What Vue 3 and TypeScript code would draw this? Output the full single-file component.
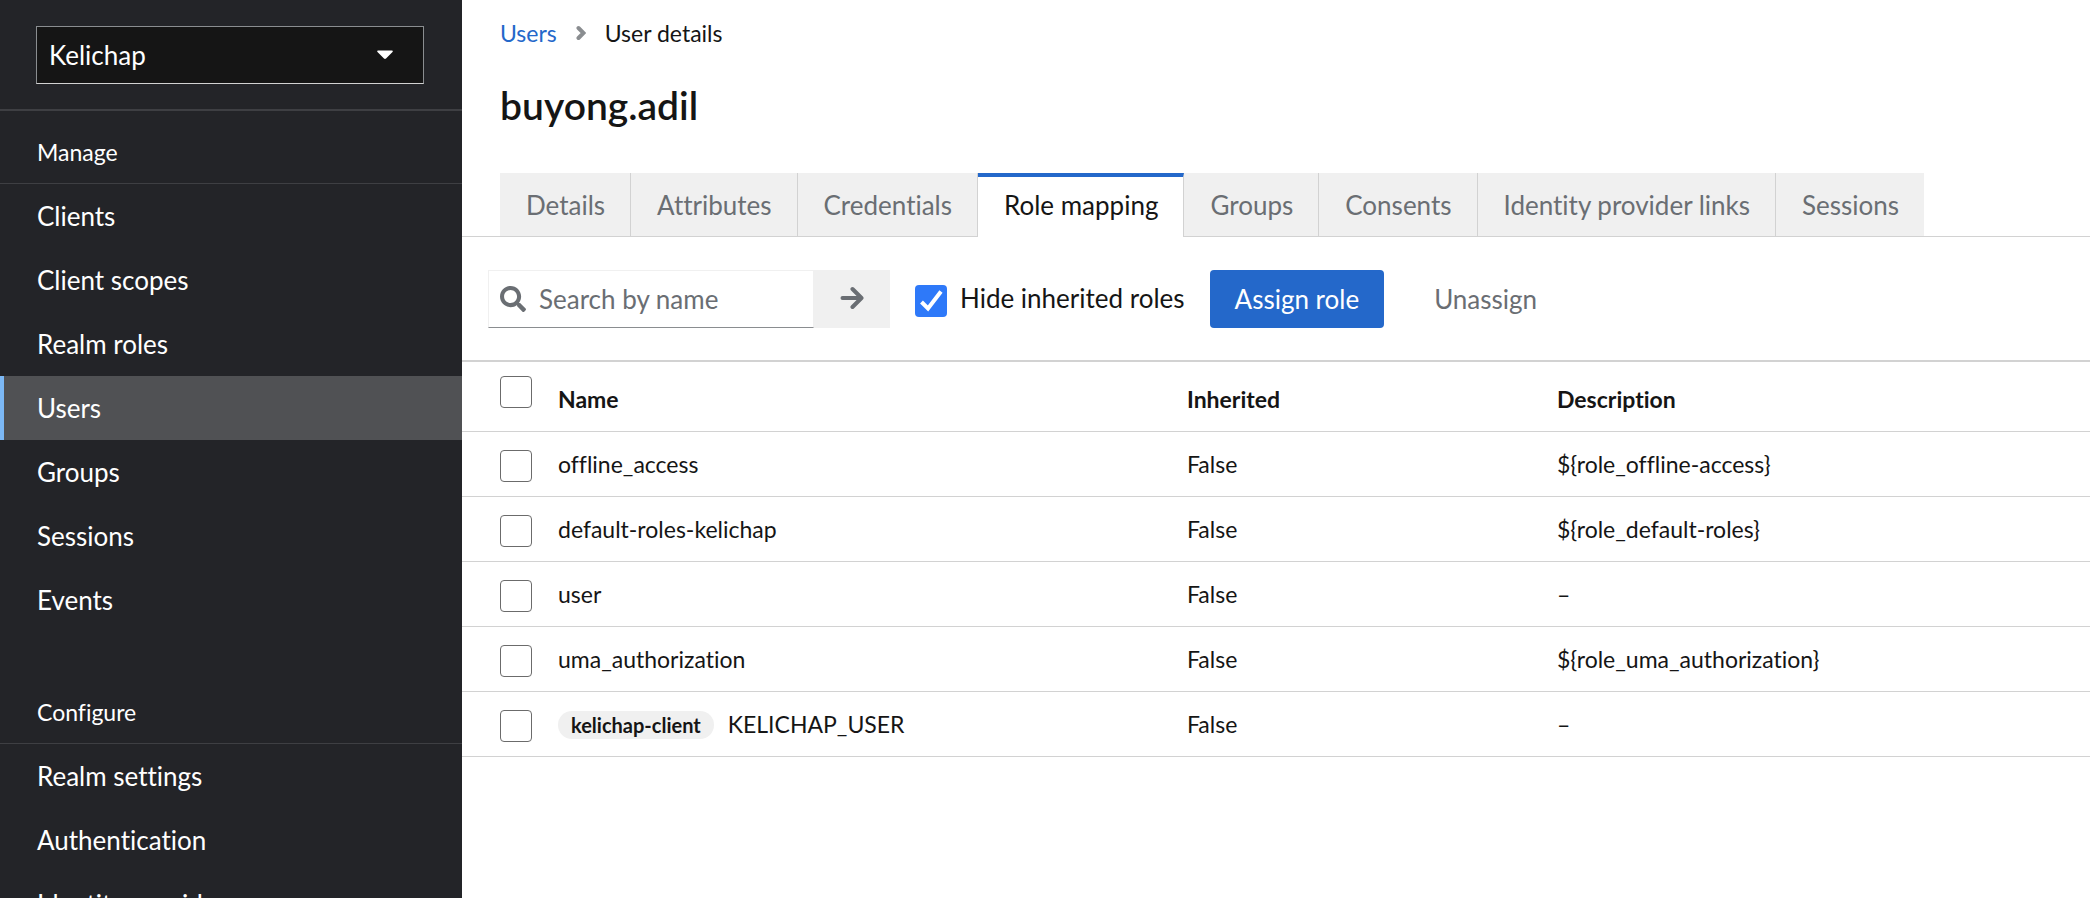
<script setup lang="ts">
import { computed, ref } from 'vue'

interface Role {
  name: string
  client?: string
  inherited: string
  description: string
}

const realm = ref('Kelichap')
const sections = [
  {
    title: 'Manage',
    items: ['Clients', 'Client scopes', 'Realm roles', 'Users', 'Groups', 'Sessions', 'Events'],
  },
  {
    title: 'Configure',
    items: ['Realm settings', 'Authentication', 'Identity providers'],
  },
]
const activePage = 'Users'

const tabs = [
  'Details',
  'Attributes',
  'Credentials',
  'Role mapping',
  'Groups',
  'Consents',
  'Identity provider links',
  'Sessions',
]
const activeTab = ref('Role mapping')

const search = ref('')
const hideInherited = ref(true)
const roles: Role[] = [
  { name: 'offline_access', inherited: 'False', description: '${role_offline-access}' },
  { name: 'default-roles-kelichap', inherited: 'False', description: '${role_default-roles}' },
  { name: 'user', inherited: 'False', description: '–' },
  { name: 'uma_authorization', inherited: 'False', description: '${role_uma_authorization}' },
  { name: 'KELICHAP_USER', client: 'kelichap-client', inherited: 'False', description: '–' },
]
const selected = ref<string[]>([])
const allSelected = computed({
  get: () => selected.value.length === roles.length,
  set: (on: boolean) => {
    selected.value = on ? roles.map((r) => r.name) : []
  },
})
</script>

<template>
  <div class="page">
    <aside class="sidebar">
      <div class="realm">
        <div class="realm-box">
          <select v-model="realm" aria-label="Realm">
            <option>Kelichap</option>
          </select>
          <svg class="caret" viewBox="0 0 16 10" aria-hidden="true">
            <path d="M1.2 0.5h13.6c.9 0 1.3 1 .7 1.6L9 8.6c-.6.6-1.4.6-2 0L.5 2.1C-.1 1.5.3.5 1.2.5z" />
          </svg>
        </div>
      </div>
      <nav>
        <section v-for="s in sections" :key="s.title" class="nav-section">
          <h2>{{ s.title }}</h2>
          <ul>
            <li v-for="item in s.items" :key="item">
              <a href="#" :class="{ current: item === activePage }">{{ item }}</a>
            </li>
          </ul>
        </section>
      </nav>
    </aside>

    <main class="content">
      <nav class="breadcrumb" aria-label="Breadcrumb">
        <a href="#">Users</a>
        <svg class="angle" viewBox="0 0 10 16" aria-hidden="true">
          <path d="M2.500 3l5 5-5 5" />
        </svg>
        <span>User details</span>
      </nav>
      <h1>buyong.adil</h1>

      <div class="tabs" role="tablist">
        <button
          v-for="t in tabs"
          :key="t"
          type="button"
          role="tab"
          class="tab"
          :class="{ active: t === activeTab }"
          :aria-selected="t === activeTab"
          @click="activeTab = t"
        >
          {{ t }}
        </button>
      </div>

      <div class="toolbar">
        <form class="search" @submit.prevent>
          <label class="search-box">
            <svg viewBox="0 0 512 512" aria-hidden="true">
              <path d="M505 442.7L405.3 343c-4.500-4.500-10.600-7-17-7H372c27.600-35.300 44-79.700 44-128C416 93.100 322.900 0 208 0S0 93.100 0 208s93.100 208 208 208c48.300 0 92.700-16.400 128-44v16.300c0 6.400 2.500 12.500 7 17l99.700 99.700c9.400 9.400 24.600 9.400 33.900 0l28.300-28.300c9.400-9.400 9.400-24.600.1-34zM208 336c-70.700 0-128-57.200-128-128 0-70.700 57.200-128 128-128 70.700 0 128 57.200 128 128 0 70.700-57.200 128-128 128z" />
            </svg>
            <input v-model="search" type="text" placeholder="Search by name" aria-label="Search by name" />
          </label>
          <button type="submit" class="go" aria-label="Search">
            <svg viewBox="0 0 24 24" aria-hidden="true">
              <path d="M2.500 12H20M12.500 3L21.500 12l-9 9" />
            </svg>
          </button>
        </form>
        <label class="hide-inherited">
          <input v-model="hideInherited" type="checkbox" class="check" />
          <span>Hide inherited roles</span>
        </label>
        <button type="button" class="assign">Assign role</button>
        <button type="button" class="unassign">Unassign</button>
      </div>

      <table class="roles">
        <thead>
          <tr>
            <th class="pick"><input v-model="allSelected" type="checkbox" class="check" aria-label="Select all rows" /></th>
            <th class="name">Name</th>
            <th class="inherited">Inherited</th>
            <th>Description</th>
          </tr>
        </thead>
        <tbody>
          <tr v-for="r in roles" :key="r.name">
            <td class="pick">
              <input v-model="selected" type="checkbox" class="check" :value="r.name" :aria-label="'Select ' + r.name" />
            </td>
            <td>
              <span v-if="r.client" class="badge">{{ r.client }}</span>{{ r.name }}
            </td>
            <td>{{ r.inherited }}</td>
            <td>{{ r.description }}</td>
          </tr>
        </tbody>
      </table>
    </main>
  </div>
</template>

<style>
body {
  margin: 0;
  background: #fff;
}
</style>

<style scoped>
.page {
  display: flex;
  height: 100vh;
  overflow: hidden;
  font-family: Lato, 'Liberation Sans', sans-serif;
  font-size: 26px;
  font-variant-ligatures: none;
  color: #151515;
}
.page * {
  box-sizing: border-box;
}
button,
input,
select {
  font: inherit;
  font-variant-ligatures: none;
  color: inherit;
  margin: 0;
  border: 0;
  border-radius: 0;
}
a {
  text-decoration: none;
}

.sidebar {
  flex: 0 0 462px;
  overflow: hidden;
  background: #232428;
  color: #fff;
}
.realm {
  padding: 26px 38px 25px 36px;
  border-bottom: 2px solid #3e3f43;
}
.realm-box {
  position: relative;
}
.realm-box select {
  display: block;
  width: 100%;
  height: 58px;
  padding: 0 12px;
  appearance: none;
  background: #151515;
  border: 1px solid #8a8d90;
  border-bottom-color: #d2d2d2;
}
.caret {
  position: absolute;
  right: 31px;
  top: 24px;
  width: 16px;
  height: 10px;
  fill: #fff;
  pointer-events: none;
}
.nav-section + .nav-section {
  margin-top: 39px;
}
.nav-section h2 {
  margin: 0;
  padding: 25px 37px 15px;
  font-size: 23px;
  font-weight: 400;
  line-height: 32px;
  border-bottom: 1px solid #3e3f43;
}
.nav-section ul {
  margin: 0;
  padding: 0;
  list-style: none;
}
.nav-section a {
  display: block;
  padding: 0 37px;
  line-height: 64px;
  color: #fff;
}
.nav-section a.current {
  padding-left: 33px;
  border-left: 4px solid #7cb8f5;
  background: #505154;
}

.content {
  flex: 1;
  min-width: 0;
}
.breadcrumb {
  display: flex;
  align-items: center;
  padding: 16px 38px 0;
  font-size: 23px;
  line-height: 34px;
}
.breadcrumb a {
  color: #2468ca;
}
.angle {
  width: 10px;
  height: 16px;
  margin: 0 19px;
  fill: none;
  stroke: #8a8d90;
  stroke-width: 4;
  stroke-linecap: round;
}
h1 {
  margin: 0;
  padding: 31px 38px 43px;
  font-size: 39px;
  font-weight: 600;
  line-height: 49px;
}

.tabs {
  display: flex;
  padding-left: 38px;
  box-shadow: inset 0 -1px #d2d2d2;
}
.tab {
  height: 64px;
  padding: 0 25px 0 26px;
  background: #f0f0f0;
  color: #6a6e73;
  border-right: 1px solid #d2d2d2;
  border-bottom: 1px solid #d2d2d2;
  white-space: nowrap;
}
.tab:last-child {
  border-right: 0;
}
.tab.active {
  padding-bottom: 4px;
  background: #fff;
  color: #151515;
  border-top: 4px solid #2468ca;
  border-bottom: 0;
}

.toolbar {
  display: flex;
  align-items: center;
  padding: 33px 26px 32px;
}
.search {
  display: flex;
}
.search-box {
  display: flex;
  align-items: center;
  width: 326px;
  height: 58px;
  padding-left: 11px;
  border: 1px solid #f0f0f0;
  border-bottom-color: #8a8d90;
}
.search-box svg {
  flex: none;
  width: 26px;
  height: 26px;
  margin-right: 13px;
  fill: #6a6e73;
}
.search-box input {
  flex: 1;
  min-width: 0;
  padding: 0;
  background: none;
  outline: 0;
}
.search-box input::placeholder {
  color: #6a6e73;
  opacity: 1;
}
.go {
  display: flex;
  align-items: center;
  justify-content: center;
  width: 76px;
  padding: 0 0 2px;
  background: #f0f0f0;
}
.go svg {
  width: 24px;
  height: 24px;
  fill: none;
  stroke: #6a6e73;
  stroke-width: 4;
  stroke-linecap: round;
  stroke-linejoin: round;
}
.check {
  display: block;
  flex: none;
  width: 32px;
  height: 32px;
  appearance: none;
  background: #fff;
  border: 1px solid #6b6b6b;
  border-radius: 4px;
}
.check:checked {
  border: 0;
  background: #2e79f9 url("data:image/svg+xml,%3Csvg xmlns='http://www.w3.org/2000/svg' viewBox='0 0 32 32'%3E%3Cpath d='M6.500 17l6.500 6.500L26 6.500' fill='none' stroke='%23fff' stroke-width='4'/%3E%3C/svg%3E");
}
.hide-inherited {
  display: flex;
  align-items: center;
  gap: 13px;
  margin: 0 25px;
}
.hide-inherited .check {
  margin-top: 4px;
}
.hide-inherited span {
  padding-bottom: 2px;
}
.assign,
.unassign {
  height: 58px;
  padding: 0 25px;
}
.assign {
  background: #2468ca;
  color: #fff;
  border-radius: 4px;
}
.unassign {
  margin-left: 25px;
  background: none;
  color: #6a6e73;
}

.roles {
  width: 100%;
  table-layout: fixed;
  border-collapse: collapse;
  border-top: 2px solid #d2d2d2;
  font-size: 23px;
  line-height: 32px;
}
.roles tr {
  border-bottom: 1px solid #d2d2d2;
}
.roles th,
.roles td {
  height: 65px;
  padding: 0;
  text-align: left;
  vertical-align: middle;
}
.roles th {
  height: 70px;
  padding-top: 6px;
}
.roles .pick {
  width: 96px;
  padding: 4px 0 0 38px;
}
.roles th.pick {
  padding: 0 0 9px 38px;
}
.roles .name {
  width: 629px;
}
.roles .inherited {
  width: 370px;
}
.badge {
  display: inline-block;
  margin-right: 14px;
  padding: 0 13px;
  border-radius: 14px;
  background: #f0f0f0;
  font-size: 20px;
  font-weight: 700;
  line-height: 28px;
}
</style>
